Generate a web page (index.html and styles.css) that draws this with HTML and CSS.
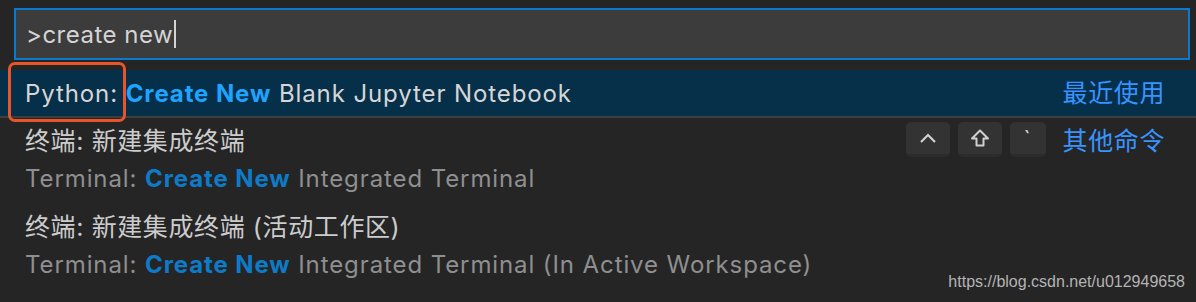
FILE: index.html
```html
<!DOCTYPE html>
<html lang="zh-CN">
<head>
    <meta charset="UTF-8">
    <title>Command Palette</title>
    <link rel="stylesheet" href="styles.css">
</head>
<body>
    <div class="quick-input">
        <div class="input-box">
            <span class="query">&gt;create new</span><span class="caret"></span>
        </div>

        <div class="list">
            <div class="item selected">
                <div class="item-text">
                    <div class="label"><span class="prefix">Python:</span> <span class="hl">Create New</span> Blank Jupyter Notebook</div>
                </div>
                <span class="group">最近使用</span>
            </div>

            <div class="item two-line">
                <div class="item-text">
                    <div class="label zh">终端: 新建集成终端</div>
                    <div class="desc">Terminal: <span class="hl">Create New</span> Integrated Terminal</div>
                </div>
                <div class="keys">
                    <span class="key">
                        <svg width="18" height="12" viewBox="0 0 18 12"><path d="M2 10 L9 3 L16 10" fill="none" stroke="#d0d0d0" stroke-width="2.2"/></svg>
                    </span>
                    <span class="key">
                        <svg width="20" height="18" viewBox="0 0 20 18"><path d="M10 1.5 L18 9.5 L13.5 9.5 L13.5 16.5 L6.5 16.5 L6.5 9.5 L2 9.5 Z" fill="none" stroke="#d0d0d0" stroke-width="2" stroke-linejoin="round"/></svg>
                    </span>
                    <span class="key key-narrow">`</span>
                </div>
                <span class="group">其他命令</span>
            </div>

            <div class="item two-line">
                <div class="item-text">
                    <div class="label zh">终端: 新建集成终端 (活动工作区)</div>
                    <div class="desc">Terminal: <span class="hl">Create New</span> Integrated Terminal (In Active Workspace)</div>
                </div>
            </div>
        </div>
    </div>

    <div class="watermark">https://blog.csdn.net/u012949658</div>
</body>
</html>
```

FILE: styles.css
```css
* {
    margin: 0;
    padding: 0;
    box-sizing: border-box;
}

body {
    width: 1196px;
    height: 302px;
    overflow: hidden;
    background: #252526;
    font-family: 'Inter', 'Noto Sans CJK SC', sans-serif;
    letter-spacing: 0.9px;
    color: #cccccc;
    position: relative;
}

.quick-input {
    padding-top: 8px;
}

.input-box {
    margin: 0 6px 0 14px;
    height: 52px;
    border: 2px solid #0a7ad0;
    background: #3c3c3c;
    display: flex;
    align-items: center;
    padding-left: 10px;
    font-size: 24px;
    letter-spacing: 0.5px;
    color: #d4d4d4;
}

.caret {
    display: inline-block;
    width: 2px;
    height: 28px;
    background: #d4d4d4;
    margin-left: 1px;
}

.list {
    margin-top: 10px;
}

.item {
    display: flex;
    align-items: center;
    padding: 0 31px 0 25px;
}

.item-text {
    flex: 1;
}

.label {
    font-size: 24px;
    color: #cccccc;
}

.label.zh {
    font-size: 25px;
    letter-spacing: 0.6px;
}

.selected {
    background: #062f4a;
    border-bottom: 2px solid #3e3e3e;
    height: 48px;
}

.selected .label {
    color: #d6d6d6;
}

.selected .hl {
    color: #1ea4ff;
    font-weight: bold;
}

.prefix {
    position: relative;
}

.prefix::after {
    content: '';
    position: absolute;
    left: -17px;
    right: -8px;
    top: -17px;
    bottom: -14px;
    border: 3px solid #e8552a;
    border-radius: 7px;
}

.two-line {
    align-items: flex-start;
    padding-top: 4px;
    height: 86px;
}

.two-line .label,
.two-line .desc {
    line-height: 38px;
}

.desc {
    font-size: 24px;
    color: #8f8f8f;
}

.desc .hl {
    color: #0e7bc9;
    font-weight: bold;
}

.group {
    font-size: 25px;
    letter-spacing: 0.6px;
    color: #3794ff;
    line-height: 46px;
}

.two-line .group {
    line-height: 38px;
}

.keys {
    display: flex;
    gap: 8px;
    margin-right: 17px;
}

.key {
    width: 44px;
    height: 35px;
    background: #333333;
    border-radius: 5px;
    border-bottom: 3px solid #2c2c2c;
    display: flex;
    align-items: center;
    justify-content: center;
    color: #d0d0d0;
    font-size: 22px;
}

.key-narrow {
    width: 36px;
    align-items: flex-start;
    padding-top: 4px;
}

.watermark {
    position: absolute;
    right: 11px;
    bottom: 11px;
    font-family: 'Liberation Sans', sans-serif;
    font-size: 16px;
    letter-spacing: 0;
    color: #b4b4b4;
}
```
